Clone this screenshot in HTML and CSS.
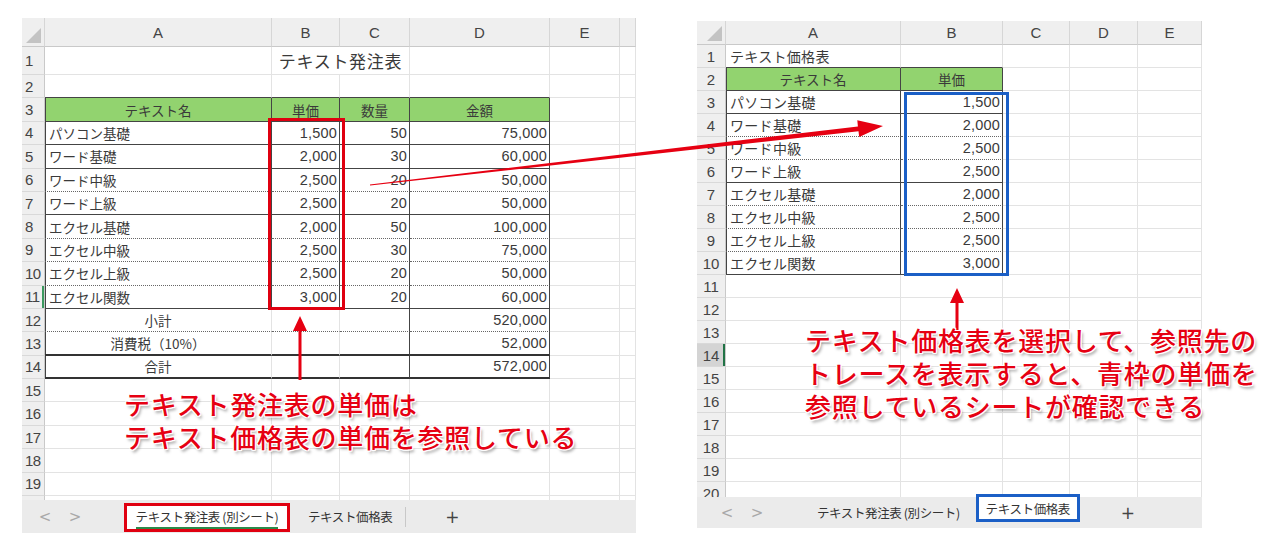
FILE: index.html
```html
<!DOCTYPE html>
<html lang="ja">
<head>
<meta charset="utf-8">
<link rel="stylesheet" href="styles.css">
</head>
<body>
<div class="page">
  <div class="sheets">
    <!-- LEFT SHEET -->
    <div class="sheet sheet-left">
      <div class="grid grid-left">
        <div class="hd corner"></div><div class="hd">A</div><div class="hd">B</div><div class="hd">C</div><div class="hd">D</div><div class="hd">E</div><div class="hd"></div>

        <div class="rh">1</div><div class="c"></div><div class="c title span2">テキスト発注表</div><div class="c"></div><div class="c"></div><div class="c"></div>
        <div class="rh">2</div><div class="c bb"></div><div class="c bb"></div><div class="c bb"></div><div class="c bb"></div><div class="c"></div><div class="c"></div>
        <div class="rh">3</div><div class="c gr bl br bb ctr">テキスト名</div><div class="c gr br bb ctr">単価</div><div class="c gr br bb ctr">数量</div><div class="c gr br bb ctr">金額</div><div class="c"></div><div class="c"></div>

        <div class="rh">4</div><div class="c bl br bb">パソコン基礎</div><div class="c br bb n">1,500</div><div class="c br bb n">50</div><div class="c br bb n">75,000</div><div class="c"></div><div class="c"></div>
        <div class="rh">5</div><div class="c bl br bb">ワード基礎</div><div class="c br bb n">2,000</div><div class="c br bb n">30</div><div class="c br bb n">60,000</div><div class="c"></div><div class="c"></div>
        <div class="rh">6</div><div class="c bl br bd">ワード中級</div><div class="c br bd n">2,500</div><div class="c br bd n">20</div><div class="c br bd n">50,000</div><div class="c"></div><div class="c"></div>
        <div class="rh">7</div><div class="c bl br bb">ワード上級</div><div class="c br bb n">2,500</div><div class="c br bb n">20</div><div class="c br bb n">50,000</div><div class="c"></div><div class="c"></div>
        <div class="rh">8</div><div class="c bl br bd">エクセル基礎</div><div class="c br bd n">2,000</div><div class="c br bd n">50</div><div class="c br bd n">100,000</div><div class="c"></div><div class="c"></div>
        <div class="rh">9</div><div class="c bl br bd">エクセル中級</div><div class="c br bd n">2,500</div><div class="c br bd n">30</div><div class="c br bd n">75,000</div><div class="c"></div><div class="c"></div>
        <div class="rh">10</div><div class="c bl br bd">エクセル上級</div><div class="c br bd n">2,500</div><div class="c br bd n">20</div><div class="c br bd n">50,000</div><div class="c"></div><div class="c"></div>
        <div class="rh act-line">11</div><div class="c bl br bb">エクセル関数</div><div class="c br bb n">3,000</div><div class="c br bb n">20</div><div class="c br bb n">60,000</div><div class="c"></div><div class="c"></div>

        <div class="rh">12</div><div class="c bl bd ctr">小計</div><div class="c bd"></div><div class="c br bd"></div><div class="c br bd n">520,000</div><div class="c"></div><div class="c"></div>
        <div class="rh">13</div><div class="c bl bb2 ctr">消費税（10%）</div><div class="c bb2"></div><div class="c br bb2"></div><div class="c br bb2 n">52,000</div><div class="c"></div><div class="c"></div>
        <div class="rh">14</div><div class="c bl bb2 ctr">合計</div><div class="c bb2"></div><div class="c br bb2"></div><div class="c br bb2 n">572,000</div><div class="c"></div><div class="c"></div>

        <div class="rh">15</div><div class="c"></div><div class="c"></div><div class="c"></div><div class="c"></div><div class="c"></div><div class="c"></div>
        <div class="rh">16</div><div class="c"></div><div class="c"></div><div class="c"></div><div class="c"></div><div class="c"></div><div class="c"></div>
        <div class="rh">17</div><div class="c"></div><div class="c"></div><div class="c"></div><div class="c"></div><div class="c"></div><div class="c"></div>
        <div class="rh">18</div><div class="c"></div><div class="c"></div><div class="c"></div><div class="c"></div><div class="c"></div><div class="c"></div>
        <div class="rh">19</div><div class="c"></div><div class="c"></div><div class="c"></div><div class="c"></div><div class="c"></div><div class="c"></div>
        <div class="rh"></div><div class="c"></div><div class="c"></div><div class="c"></div><div class="c"></div><div class="c"></div><div class="c"></div>
      </div>
      <div class="tabbar tabbar-left">
        <span class="nav">&lt;</span><span class="nav">&gt;</span>
        <span class="tab active red"><span class="ul">テキスト発注表 (別シート)</span></span>
        <span class="tab plain">テキスト価格表</span>
        <span class="sep"></span>
        <span class="plus">+</span>
      </div>
    </div>

    <!-- RIGHT SHEET -->
    <div class="sheet sheet-right">
      <div class="grid grid-right">
        <div class="hd corner"></div><div class="hd">A</div><div class="hd">B</div><div class="hd">C</div><div class="hd">D</div><div class="hd">E</div>

        <div class="rh c2">1</div><div class="c bb r">テキスト価格表</div><div class="c bb"></div><div class="c"></div><div class="c"></div><div class="c"></div>
        <div class="rh c2">2</div><div class="c gr bl br bb ctr">テキスト名</div><div class="c gr br bb ctr">単価</div><div class="c"></div><div class="c"></div><div class="c"></div>
        <div class="rh c2">3</div><div class="c bl br bb r">パソコン基礎</div><div class="c br bb n">1,500</div><div class="c"></div><div class="c"></div><div class="c"></div>
        <div class="rh c2">4</div><div class="c bl br bd r">ワード基礎</div><div class="c br bd n">2,000</div><div class="c"></div><div class="c"></div><div class="c"></div>
        <div class="rh c2">5</div><div class="c bl br bd r">ワード中級</div><div class="c br bd n">2,500</div><div class="c"></div><div class="c"></div><div class="c"></div>
        <div class="rh c2">6</div><div class="c bl br bb r">ワード上級</div><div class="c br bb n">2,500</div><div class="c"></div><div class="c"></div><div class="c"></div>
        <div class="rh c2">7</div><div class="c bl br bd r">エクセル基礎</div><div class="c br bd n">2,000</div><div class="c"></div><div class="c"></div><div class="c"></div>
        <div class="rh c2">8</div><div class="c bl br bd r">エクセル中級</div><div class="c br bd n">2,500</div><div class="c"></div><div class="c"></div><div class="c"></div>
        <div class="rh c2">9</div><div class="c bl br bd r">エクセル上級</div><div class="c br bd n">2,500</div><div class="c"></div><div class="c"></div><div class="c"></div>
        <div class="rh c2">10</div><div class="c bl br bb r">エクセル関数</div><div class="c br bb n">3,000</div><div class="c"></div><div class="c"></div><div class="c"></div>
        <div class="rh c2">11</div><div class="c"></div><div class="c"></div><div class="c"></div><div class="c"></div><div class="c"></div>
        <div class="rh c2">12</div><div class="c"></div><div class="c"></div><div class="c"></div><div class="c"></div><div class="c"></div>
        <div class="rh c2">13</div><div class="c"></div><div class="c"></div><div class="c"></div><div class="c"></div><div class="c"></div>
        <div class="rh c2 act">14</div><div class="c"></div><div class="c"></div><div class="c"></div><div class="c"></div><div class="c"></div>
        <div class="rh c2">15</div><div class="c"></div><div class="c"></div><div class="c"></div><div class="c"></div><div class="c"></div>
        <div class="rh c2">16</div><div class="c"></div><div class="c"></div><div class="c"></div><div class="c"></div><div class="c"></div>
        <div class="rh c2">17</div><div class="c"></div><div class="c"></div><div class="c"></div><div class="c"></div><div class="c"></div>
        <div class="rh c2">18</div><div class="c"></div><div class="c"></div><div class="c"></div><div class="c"></div><div class="c"></div>
        <div class="rh c2">19</div><div class="c"></div><div class="c"></div><div class="c"></div><div class="c"></div><div class="c"></div>
        <div class="rh c2">20</div><div class="c"></div><div class="c"></div><div class="c"></div><div class="c"></div><div class="c"></div>
      </div>
      <div class="tabbar tabbar-right">
        <span class="nav">&lt;</span><span class="nav">&gt;</span>
        <span class="tab plain wide">テキスト発注表 (別シート)</span>
        <span class="tab active blue">テキスト価格表</span>
        <span class="plus">+</span>
      </div>
    </div>
  </div>

  <!-- overlays -->
  <div class="box box-red"></div>
  <div class="box box-blue"></div>

  <svg class="arrows" width="1280" height="554" viewBox="0 0 1280 554">
    <g fill="#e60012">
      <rect x="298.5" y="328" width="3" height="52"/>
      <polygon points="300,316 293,331 307,331"/>
      <polygon points="369.9,184.4 857.9,126.4 857.3,120.3 883,126 859.2,137.1 858.5,131.2 370.1,185.6"/>
      <rect x="955.5" y="300" width="3" height="30"/>
      <polygon points="957,288 950,303 964,303"/>
    </g>
  </svg>

  <div class="caption caption-left">テキスト発注表の単価は<br>テキスト価格表の単価を参照している</div>
  <div class="caption caption-right">テキスト価格表を選択して、参照先の<br>トレースを表示すると、青枠の単価を<br>参照しているシートが確認できる</div>
</div>
</body>
</html>
```

FILE: styles.css
```css
* { box-sizing: border-box; }
html, body { margin: 0; padding: 0; background: #fff; }
body {
  font-family: "Noto Sans CJK JP", "Noto Sans", sans-serif;
  color: #3a3a3a;
}
.page {
  position: relative;
  width: 1280px;
  height: 554px;
  overflow: hidden;
}
.sheets {
  display: flex;
  align-items: flex-start;
}
.sheet {
  display: flex;
  flex-direction: column;
  background: #fff;
}
.sheet-left { margin: 18px 0 0 22px; width: 614px; }
.sheet-right { margin: 21px 0 0 61px; width: 505px; }

.grid {
  display: grid;
  overflow: hidden;
}
.grid-left {
  grid-template-columns: 23px 227px 68px 70px 140px 70px 16px;
  grid-template-rows: 29px 28px repeat(19, 23.4px);
  height: 482px;
}
.grid-right {
  grid-template-columns: 29px 175px 102px 67px 68px 64px;
  grid-template-rows: 24px repeat(20, 23px);
  height: 476px;
}

.hd {
  background: #efefef;
  border-right: 1px solid #d6d6d6;
  border-bottom: 1px solid #c9c9c9;
  display: flex;
  align-items: center;
  justify-content: center;
  font-family: "Liberation Sans", "Noto Sans CJK JP", sans-serif;
  font-size: 15px;
  color: #444;
}
.corner { position: relative; }
.corner::after {
  content: "";
  position: absolute;
  right: 3px;
  bottom: 3px;
  width: 0;
  height: 0;
  border-left: 15px solid transparent;
  border-bottom: 15px solid #c3c3c3;
}
.rh {
  background: #efefef;
  border-right: 1px solid #c9c9c9;
  border-bottom: 1px solid #d9d9d9;
  display: flex;
  align-items: center;
  justify-content: flex-start;
  padding-left: 3px;
  font-family: "Liberation Sans", "Noto Sans CJK JP", sans-serif;
  font-size: 15px;
  color: #444;
  letter-spacing: -0.5px;
}
.rh.c2 { justify-content: center; padding-left: 0; letter-spacing: 0; }
.rh.act { background: #d4d4d4; box-shadow: inset -2px 0 0 #217346; }
.rh.act-line { box-shadow: inset -2px 0 0 #3c9a5f; }

.c {
  border-right: 1px solid #e3e3e3;
  border-bottom: 1px solid #e3e3e3;
  display: flex;
  align-items: center;
  padding: 0 4px;
  font-size: 13.5px;
  color: #3a3a3a;
  white-space: nowrap;
  min-width: 0;
}
.c.r { font-size: 14px; letter-spacing: 0.3px; }
.c.n {
  justify-content: flex-end;
  padding-right: 2px;
  font-family: "Liberation Sans", "Noto Sans CJK JP", sans-serif;
  font-size: 14.5px;
  letter-spacing: 0.2px;
}
.c.ctr { justify-content: center; }
.c.title {
  grid-column: span 2;
  justify-content: center;
  font-size: 17px;
  letter-spacing: 0.7px;
}
.c.gr { background: #92d36f; }
.c.br { border-right-color: #444; }
.c.bb { border-bottom: 1px solid #444; }
.c.bd { border-bottom: 1px dotted #666; }
.c.bb2 { border-bottom: 2px solid #333; }
.c.bl { box-shadow: inset 1px 0 0 #444; }

.tabbar {
  display: flex;
  align-items: center;
  background: #ebebeb;
  font-size: 12.5px;
  color: #333;
}
.tabbar-left { height: 33px; padding-left: 8px; }
.tabbar-right { height: 31px; padding-left: 15px; }
.nav {
  font-family: "DejaVu Sans", sans-serif;
  color: #a8a8a8;
  font-size: 15px;
  width: 30px;
  text-align: center;
}
.tab {
  white-space: nowrap;
  letter-spacing: -0.4px;
}
.tab.active {
  background: #fff;
  display: flex;
  align-items: center;
  justify-content: center;
}
.tab.red {
  margin-left: 34px;
  width: 166px;
  height: 29px;
  border: 3px solid #e00010;
  margin-top: 2px;
}
.tab.red .ul {
  border-bottom: 2px solid #2b8a4a;
  line-height: 18px;
  padding-bottom: 1px;
  margin-top: 2px;
}
.tabbar-left .tab.plain { margin-left: 18px; }
.sep {
  width: 1px;
  height: 20px;
  background: #c8c8c8;
  margin-left: 13px;
}
.plus {
  font-family: "DejaVu Sans", sans-serif;
  font-size: 17px;
  color: #444;
  margin-left: 39px;
}
.tabbar-right .tab.wide { margin-left: 45px; }
.tab.blue {
  margin-left: 16px;
  width: 104px;
  height: 28px;
  border: 3px solid #1b5fc6;
  align-self: flex-start;
  margin-top: -3px;
}
.tabbar-right .plus { margin-left: 41px; }

.box {
  position: absolute;
  pointer-events: none;
}
.box-red {
  left: 268px;
  top: 118px;
  width: 77px;
  height: 192px;
  border: 3px solid #e00010;
}
.box-blue {
  left: 904px;
  top: 92px;
  width: 105px;
  height: 184px;
  border: 3px solid #1b5fc6;
}
.arrows {
  position: absolute;
  left: 0;
  top: 0;
  pointer-events: none;
}
.caption {
  position: absolute;
  font-size: 26px;
  font-weight: 500;
  line-height: 33px;
  letter-spacing: 0.75px;
  color: #e60012;
  white-space: nowrap;
  text-shadow:
    1px 0 0 #fff, -1px 0 0 #fff, 0 1px 0 #fff, 0 -1px 0 #fff,
    1px 1px 0 #fff, -1px -1px 0 #fff, 1px -1px 0 #fff, -1px 1px 0 #fff,
    2px 3px 3px rgba(0, 0, 0, 0.35);
}
.caption-left { left: 124px; top: 387px; }
.caption-right { left: 805px; top: 323px; }
```
